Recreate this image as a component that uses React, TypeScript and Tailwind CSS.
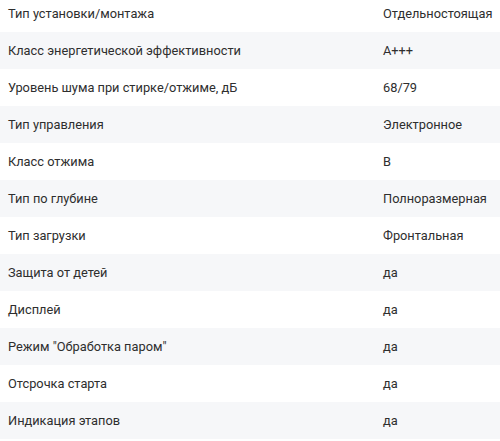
const specs: [string, string][] = [
  ["Тип установки/монтажа", "Отдельностоящая"],
  ["Класс энергетической эффективности", "А+++"],
  ["Уровень шума при стирке/отжиме, дБ", "68/79"],
  ["Тип управления", "Электронное"],
  ["Класс отжима", "B"],
  ["Тип по глубине", "Полноразмерная"],
  ["Тип загрузки", "Фронтальная"],
  ["Защита от детей", "да"],
  ["Дисплей", "да"],
  ["Режим \"Обработка паром\"", "да"],
  ["Отсрочка старта", "да"],
  ["Индикация этапов", "да"],
]

export default function App() {
  return (
    <div className="w-[500px] h-[441px] overflow-hidden bg-white font-['Roboto','Noto_Sans',sans-serif] text-[12.8px] text-[#2e2e2e]">
      <div className="-mt-[5px]">
        {specs.map(([label, value], i) => (
          <div
            key={label}
            className={`flex h-[37px] items-center ${i % 2 === 1 ? "bg-[#f6f7f9]" : "bg-white"}`}
          >
            <div className="w-[383px] pl-2">{label}</div>
            <div className="flex-1">{value}</div>
          </div>
        ))}
      </div>
    </div>
  )
}
